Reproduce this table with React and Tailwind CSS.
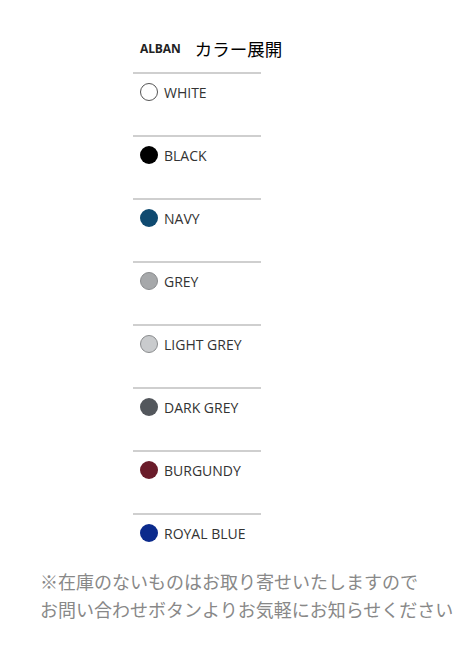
const COLORS = [
  { name: 'WHITE', swatch: 'bg-white border border-[#555]' },
  { name: 'BLACK', swatch: 'bg-black' },
  { name: 'NAVY', swatch: 'bg-[#0f4a70]' },
  { name: 'GREY', swatch: 'bg-[#a6a8aa] border border-[#8a8c8e]' },
  { name: 'LIGHT GREY', swatch: 'bg-[#c9cbcd] border border-[#8a8c8e]' },
  { name: 'DARK GREY', swatch: 'bg-[#53575c]' },
  { name: 'BURGUNDY', swatch: 'bg-[#6a1c2a]' },
  { name: 'ROYAL BLUE', swatch: 'bg-[#0b2a8c]' },
];

export default function App() {
  return (
    <div className="w-[460px] h-[647px] bg-white font-['Open_Sans','Noto_Sans_CJK_JP',sans-serif]">
      <div className="pl-[133px] pt-[34px]">
        <div className="flex items-center h-[38px] pl-[7px] pb-[8px]">
          <span className="text-[12px] font-bold text-[#222] tracking-[-0.1px]">ALBAN</span>
          <span className="ml-[14px] text-[17.5px] text-black font-['Noto_Sans_CJK_JP',sans-serif]">カラー展開</span>
        </div>
        <ul className="w-[128px]">
          {COLORS.map((c) => (
            <li key={c.name} className="h-[63px] border-t-2 border-[#cfcfcf] pt-[8px] pl-[7px]">
              <div className="flex items-center h-[20px]">
                <span className={`w-[18px] h-[18px] rounded-full box-border ${c.swatch}`} />
                <span className="ml-[6px] text-[14px] text-[#333] leading-none mt-[1px]">{c.name}</span>
              </div>
            </li>
          ))}
        </ul>
      </div>
      <p className="pl-[40px] mt-[-9px] text-[18px] leading-[28px] text-[#888] font-['Noto_Sans_CJK_JP',sans-serif]">
        ※在庫のないものはお取り寄せいたしますので
        <br />
        お問い合わせボタンよりお気軽にお知らせください
      </p>
    </div>
  );
}
